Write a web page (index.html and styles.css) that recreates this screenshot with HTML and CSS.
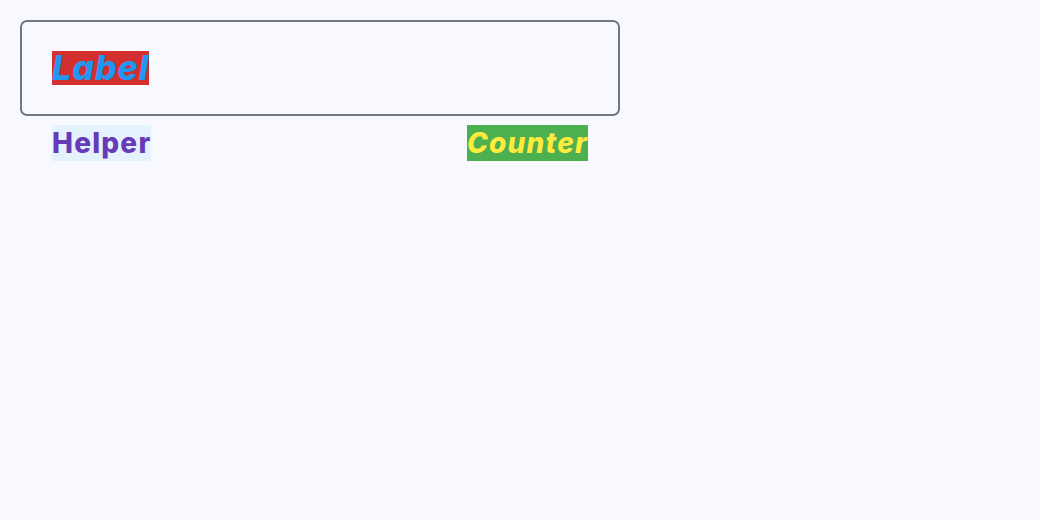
FILE: index.html
```html
<!DOCTYPE html>
<html>
<head>
<meta charset="utf-8">
<link rel="stylesheet" href="styles.css">
</head>
<body>
<div class="field">
  <div class="box">
    <span class="label">Label</span>
  </div>
  <div class="support">
    <span class="helper">Helper</span>
    <span class="counter">Counter</span>
  </div>
</div>
</body>
</html>
```
FILE: styles.css
```css
html, body {
  margin: 0;
  padding: 0;
  background: #f8f9ff;
  font-family: "Inter", sans-serif;
}
body {
  padding: 20px;
}
.field {
  width: 600px;
  display: flex;
  flex-direction: column;
}
.box {
  height: 96px;
  box-sizing: border-box;
  border: 2px solid #74777f;
  border-radius: 7px;
  display: flex;
  align-items: center;
  padding-left: 30px;
}
.label {
  background: #d32f2f;
  color: #2196f3;
  font-family: "Inter", sans-serif;
  font-weight: 800;
  font-style: italic;
  font-size: 34px;
  line-height: 34px;
  letter-spacing: 1px;
}
.support {
  display: flex;
  justify-content: space-between;
  padding: 9px 32px 0;
}
.helper {
  background: #e3f2fd;
  color: #673ab7;
  font-family: "Inter", sans-serif;
  font-weight: 800;
  font-size: 28px;
  line-height: 36px;
  letter-spacing: 1.2px;
}
.counter {
  background: #4caf50;
  color: #ffeb3b;
  font-family: "Inter", sans-serif;
  font-weight: 800;
  font-style: italic;
  font-size: 28px;
  line-height: 36px;
  letter-spacing: 1.2px;
}
```
